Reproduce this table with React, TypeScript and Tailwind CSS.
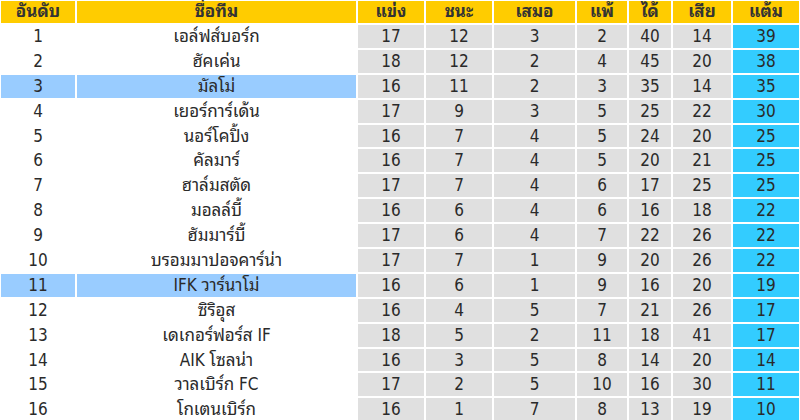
import React from 'react'

type Team = {
  rank: number;
  name: string;
  played: number;
  won: number;
  drawn: number;
  lost: number;
  gf: number;
  ga: number;
  pts: number;
};

const teams: Team[] = [
  { rank: 1, name: "เอล์ฟส์บอร์ก", played: 17, won: 12, drawn: 3, lost: 2, gf: 40, ga: 14, pts: 39 },
  { rank: 2, name: "ฮัคเค่น", played: 18, won: 12, drawn: 2, lost: 4, gf: 45, ga: 20, pts: 38 },
  { rank: 3, name: "มัลโม่", played: 16, won: 11, drawn: 2, lost: 3, gf: 35, ga: 14, pts: 35 },
  { rank: 4, name: "เยอร์การ์เด้น", played: 17, won: 9, drawn: 3, lost: 5, gf: 25, ga: 22, pts: 30 },
  { rank: 5, name: "นอร์โคปิ้ง", played: 16, won: 7, drawn: 4, lost: 5, gf: 24, ga: 20, pts: 25 },
  { rank: 6, name: "คัลมาร์", played: 16, won: 7, drawn: 4, lost: 5, gf: 20, ga: 21, pts: 25 },
  { rank: 7, name: "ฮาล์มสตัด", played: 17, won: 7, drawn: 4, lost: 6, gf: 17, ga: 25, pts: 25 },
  { rank: 8, name: "มอลล์บี้", played: 16, won: 6, drawn: 4, lost: 6, gf: 16, ga: 18, pts: 22 },
  { rank: 9, name: "ฮัมมาร์บี้", played: 17, won: 6, drawn: 4, lost: 7, gf: 22, ga: 26, pts: 22 },
  { rank: 10, name: "บรอมมาปอจคาร์น่า", played: 17, won: 7, drawn: 1, lost: 9, gf: 20, ga: 26, pts: 22 },
  { rank: 11, name: "IFK วาร์นาโม่", played: 16, won: 6, drawn: 1, lost: 9, gf: 16, ga: 20, pts: 19 },
  { rank: 12, name: "ซิริอุส", played: 16, won: 4, drawn: 5, lost: 7, gf: 21, ga: 26, pts: 17 },
  { rank: 13, name: "เดเกอร์ฟอร์ส IF", played: 18, won: 5, drawn: 2, lost: 11, gf: 18, ga: 41, pts: 17 },
  { rank: 14, name: "AIK โซลน่า", played: 16, won: 3, drawn: 5, lost: 8, gf: 14, ga: 20, pts: 14 },
  { rank: 15, name: "วาลเบิร์ก FC", played: 17, won: 2, drawn: 5, lost: 10, gf: 16, ga: 30, pts: 11 },
  { rank: 16, name: "โกเตนเบิร์ก", played: 16, won: 1, drawn: 7, lost: 8, gf: 13, ga: 19, pts: 10 },
];

const headers = ["อันดับ", "ชื่อทีม", "แข่ง", "ชนะ", "เสมอ", "แพ้", "ได้", "เสีย", "แต้ม"];

const highlighted = [3, 11];

const cell = "flex items-center justify-center h-[22.9px] leading-none";

const App = () => {
  return (
    <div
      className="w-[800px] h-[420px] overflow-hidden bg-white text-[17px] text-[#2a2a2a]"
      style={{ fontFamily: '"DejaVu Sans Condensed", Tahoma, "Noto Sans Thai Looped", Loma, Garuda, "DejaVu Sans", sans-serif' }}
    >
      <div className="grid grid-cols-[74px_279px_66px_66px_81px_50px_42px_58px_1fr] gap-[2px] p-[1px]">
        {headers.map((h) => (
          <div key={h} className="flex items-center justify-center h-[22px] bg-[#ffcc00] font-bold text-[#333]">
            {h}
          </div>
        ))}
        {teams.map((t) => {
          const hi = highlighted.includes(t.rank);
          const side = hi ? "bg-[#99ccff]" : "bg-white";
          return (
            <React.Fragment key={t.rank}>
              <div className={`${cell} ${side}`}>{t.rank}</div>
              <div className={`${cell} ${side}`}>{t.name}</div>
              <div className={`${cell} bg-[#e0e0e0]`}>{t.played}</div>
              <div className={`${cell} bg-[#e0e0e0]`}>{t.won}</div>
              <div className={`${cell} bg-[#e0e0e0]`}>{t.drawn}</div>
              <div className={`${cell} bg-[#e0e0e0]`}>{t.lost}</div>
              <div className={`${cell} bg-[#e0e0e0]`}>{t.gf}</div>
              <div className={`${cell} bg-[#e0e0e0]`}>{t.ga}</div>
              <div className={`${cell} bg-[#33ccff]`}>{t.pts}</div>
            </React.Fragment>
          );
        })}
      </div>
    </div>
  )
}

export default App;
